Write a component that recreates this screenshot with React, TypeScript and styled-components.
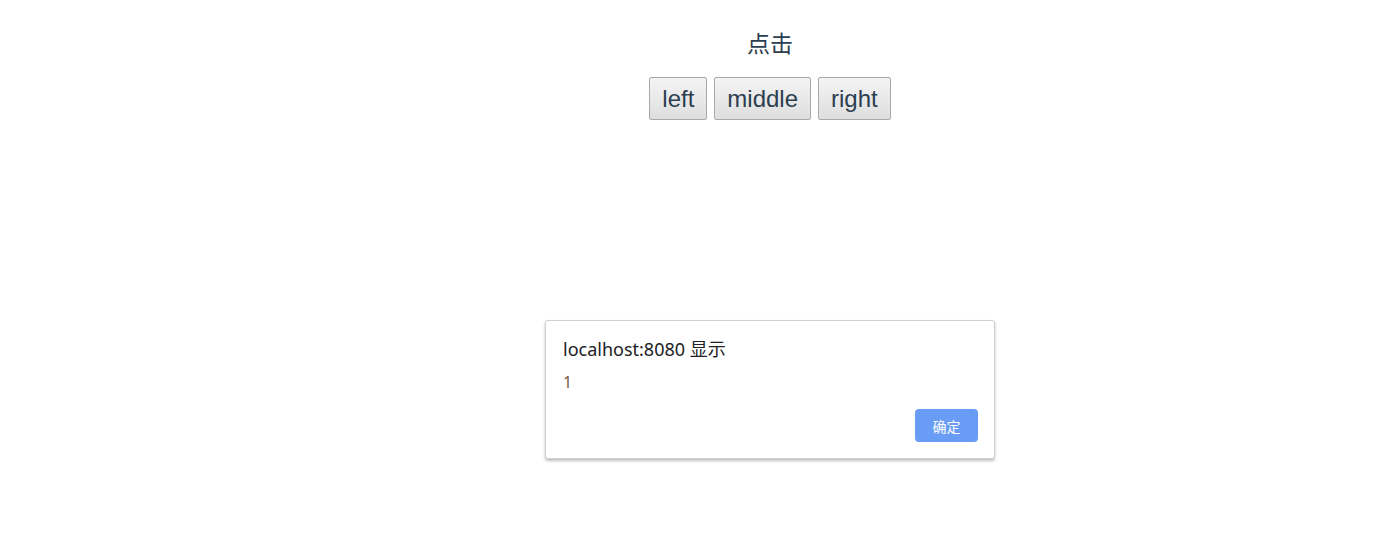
import React from "react";
import styled, { createGlobalStyle } from "styled-components";

const GlobalStyle = createGlobalStyle`
  html, body {
    margin: 0;
    padding: 0;
    background: #ffffff;
  }
  body {
    font-family: "Liberation Sans", "Noto Sans CJK SC", Arial, sans-serif;
  }
`;

const Page = styled.div`
  width: 1397px;
  height: 551px;
  box-sizing: border-box;
  padding: 26px 0 0 143px;
  display: flex;
  flex-direction: column;
  align-items: center;
  color: #2c3e50;
  overflow: hidden;
`;

const Title = styled.div`
  font-family: "Noto Sans CJK SC", sans-serif;
  font-size: 23px;
  line-height: 32px;
  height: 32px;
  color: #2c3e50;
`;

const ButtonRow = styled.div`
  display: flex;
  gap: 7px;
  margin-top: 19px;
`;

const PlainButton = styled.button`
  height: 43px;
  padding: 0 12px;
  font-family: "Liberation Sans", Arial, sans-serif;
  font-size: 24px;
  color: #2c3e50;
  background: linear-gradient(#f4f4f4, #dedede);
  border: 1px solid #a9a9a9;
  border-radius: 2px;
  cursor: pointer;
`;

const Dialog = styled.div`
  margin-top: 200px;
  width: 450px;
  height: 139px;
  box-sizing: border-box;
  border: 1px solid #cfcfcf;
  border-radius: 3px;
  background: #ffffff;
  box-shadow: 0 2px 3px rgba(0, 0, 0, 0.25);
  padding: 15px 16px 16px 17px;
  display: flex;
  flex-direction: column;
  font-family: "Noto Sans", "Noto Sans CJK SC", sans-serif;
`;

const DialogTitle = styled.div`
  font-size: 18px;
  line-height: 26px;
  color: #202124;
`;

const DialogMessage = styled.div`
  margin-top: 9px;
  font-size: 16px;
  line-height: 22px;
  color: #7a5a46;
`;

const DialogFooter = styled.div`
  margin-top: auto;
  display: flex;
  justify-content: flex-end;
`;

const ConfirmButton = styled.button`
  width: 63px;
  height: 33px;
  border: none;
  border-radius: 4px;
  background: #699df5;
  color: #ffffff;
  font-family: "Noto Sans CJK SC", sans-serif;
  font-size: 14px;
  cursor: pointer;
`;

const App: React.FC = () => {
  return (
    <Page>
      <GlobalStyle />
      <Title>点击</Title>
      <ButtonRow>
        <PlainButton>left</PlainButton>
        <PlainButton>middle</PlainButton>
        <PlainButton>right</PlainButton>
      </ButtonRow>
      <Dialog>
        <DialogTitle>localhost:8080 显示</DialogTitle>
        <DialogMessage>1</DialogMessage>
        <DialogFooter>
          <ConfirmButton>确定</ConfirmButton>
        </DialogFooter>
      </Dialog>
    </Page>
  );
};

export default App;
